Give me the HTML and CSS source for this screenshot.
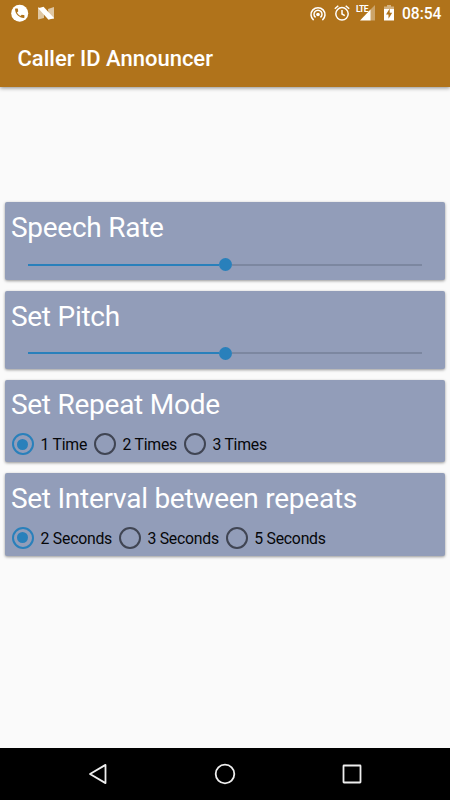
FILE: index.html
```html
<!DOCTYPE html>
<html lang="en">
<head>
<meta charset="utf-8">
<title>Caller ID Announcer</title>
<link rel="stylesheet" href="styles.css">
</head>
<body>
<div class="screen">
  <header class="top">
    <div class="status">
      <div class="status-left">
        <svg width="18" height="18" viewBox="0 0 18 18"><circle cx="8.700" cy="9.200" r="8.500" fill="#fff"/><path transform="translate(2.500 3) scale(.52)" fill="#b0731b" d="M6.620 10.790c1.440 2.830 3.760 5.140 6.590 6.590l2.200-2.200c.27-.27.67-.36 1.020-.24 1.120.37 2.330.57 3.570.57.55 0 1 .45 1 1V20c0 .55-.45 1-1 1-9.390 0-17-7.610-17-17 0-.55.45-1 1-1h3.500c.55 0 1 .45 1 1 0 1.250.2 2.450.57 3.570.11.350.03.740-.25 1.020l-2.200 2.200z"/></svg>
        <svg width="18" height="18" viewBox="0 0 18 18"><path fill="#fff" opacity=".6" d="M1 3l6 3v8L1 15.500zM11 5l6-2v12l-5 0z"/><path fill="#fff" d="M1.200 4.300L6.500 2.800 17 14l-5.500 1.800z"/></svg>
      </div>
      <div class="status-right">
        <svg class="cast" width="18" height="18" viewBox="0 0 18 18" fill="none" stroke="#fff" stroke-width="1.500"><path d="M4.600 15.100a7 7 0 1 1 8.800 0M6.600 12.400a4 4 0 1 1 4.800 0"/><circle cx="9" cy="9.500" r="1.800" fill="#fff" stroke="none"/></svg>
        <svg class="alarm" width="18" height="18" viewBox="0 0 18 18" fill="none" stroke="#fff" stroke-width="1.500"><circle cx="9" cy="9.800" r="6.200"/><path d="M9 6v4l2.800 1.700M1.800 4.700l3.500-3M16.200 4.700l-3.500-3"/></svg>
        <span class="lte">LTE</span>
        <svg class="signal" width="15" height="16" viewBox="0 0 15 16"><path fill="#fff" opacity=".35" d="M15 0v15.500H10V5z"/><path fill="#fff" d="M0 15.500L10.500 4.500v11z"/></svg>
        <svg class="battery" width="10" height="16" viewBox="0 0 10 16"><path fill="#fff" opacity=".45" d="M3 0h4v1.500h3V4H0V1.500h3z"/><path fill="#fff" d="M0 4h10v11.500H0z"/><path fill="#b0731b" d="M5.700 3.500L2 9.500h2.500v4.300L8.200 7.800H5.700z"/></svg>
        <span class="clock">08:54</span>
      </div>
    </div>
    <h1 class="title">Caller ID Announcer</h1>
  </header>
  <main class="content">
    <section class="card slider-card">
      <h2>Speech Rate</h2>
      <div class="slider"><span class="fill"></span><span class="thumb"></span><span class="rest"></span></div>
    </section>
    <section class="card slider-card">
      <h2>Set Pitch</h2>
      <div class="slider"><span class="fill"></span><span class="thumb"></span><span class="rest"></span></div>
    </section>
    <section class="card radio-card">
      <h2>Set Repeat Mode</h2>
      <div class="options">
        <div class="option"><i class="radio on"></i><span>1 Time</span></div>
        <div class="option"><i class="radio"></i><span>2 Times</span></div>
        <div class="option"><i class="radio"></i><span>3 Times</span></div>
      </div>
    </section>
    <section class="card radio-card">
      <h2>Set Interval between repeats</h2>
      <div class="options">
        <div class="option"><i class="radio on"></i><span>2 Seconds</span></div>
        <div class="option"><i class="radio"></i><span>3 Seconds</span></div>
        <div class="option"><i class="radio"></i><span>5 Seconds</span></div>
      </div>
    </section>
  </main>
  <nav class="nav">
    <svg width="24" height="24" viewBox="0 0 24 24"><path d="M19.500 2.900v18.200L4 12z"/></svg>
    <svg width="24" height="24" viewBox="0 0 24 24"><circle cx="12" cy="12" r="9.300"/></svg>
    <svg width="24" height="24" viewBox="0 0 24 24"><rect x="3.500" y="3.500" width="17" height="17" rx=".5"/></svg>
  </nav>
</div>
</body>
</html>
```

FILE: styles.css
```css
* { box-sizing: border-box; }
body { margin: 0; font-family: Roboto, sans-serif; }
.screen {
  width: 450px;
  height: 800px;
  display: flex;
  flex-direction: column;
  background: #fafafa;
  overflow: hidden;
}
.top {
  height: 87px;
  background: #b0731b;
  color: #fff;
  box-shadow: 0 1px 4px rgba(0, 0, 0, .45);
}
.status {
  height: 27px;
  padding: 0 8.500px 0 11px;
  display: flex;
  justify-content: space-between;
}
.status-left { display: flex; gap: 8px; padding-top: 4px; }
.status-right { display: flex; align-items: flex-start; }
.cast { margin: 5px 6px 0 0; }
.alarm { margin: 4px 5px 0 0; }
.lte {
  width: 12px;
  margin-right: -8px;
  padding-top: 4px;
  font: 700 8.500px/10px "Roboto", sans-serif;
  letter-spacing: -.6px;
}
.signal { margin: 5px 9px 0 0; }
.battery { margin: 5px 8px 0 0; }
.clock { font-size: 15.600px; font-weight: 500; line-height: 28px; }
.title { margin: 0; padding-left: 17.500px; font-size: 22px; font-weight: 500; line-height: 63px; }
.content {
  flex: 1;
  display: flex;
  flex-direction: column;
  gap: 11px;
  padding: 115px 5.500px 0 5.400px;
}
.card {
  background: #929db9;
  border-radius: 2px;
  padding: 0 5.500px;
  box-shadow: 0 1px 3px rgba(0, 0, 0, .4);
}
.slider-card { height: 77.800px; }
.radio-card { height: 82.600px; }
.card h2 {
  margin: 0;
  padding-top: 9px;
  color: #fff;
  font-size: 28px;
  font-weight: 400;
  line-height: 33px;
  letter-spacing: -.25px;
}
.radio-card h2 { padding-top: 8.800px; }
.slider { display: flex; align-items: center; height: 14px; margin: 13.700px 17px 0 17.400px; }
.fill, .rest { flex: 1; height: 2px; }
.fill { background: #2980bb; }
.rest { background: #7c87a0; }
.thumb { width: 13px; height: 13px; border-radius: 50%; background: #2980bb; }
.options { display: flex; gap: 6.800px; padding: 12px 0 0 1px; }
.option { display: flex; align-items: center; gap: 6.700px; height: 22px; color: #060709; font-size: 15.800px; letter-spacing: -.25px; }
.option span { padding-top: 1px; }
.radio {
  width: 22px;
  height: 22px;
  border: 2px solid #404553;
  border-radius: 50%;
  display: flex;
  align-items: center;
  justify-content: center;
}
.radio.on { border-color: #2980bb; }
.radio.on::after { content: ""; width: 11px; height: 11px; border-radius: 50%; background: #2980bb; }
.nav {
  height: 52px;
  background: #000;
  display: flex;
  justify-content: space-between;
  align-items: center;
  padding: 0 86px;
}
.nav svg { fill: none; stroke: #eee; stroke-width: 1.800; stroke-linejoin: round; }
```
